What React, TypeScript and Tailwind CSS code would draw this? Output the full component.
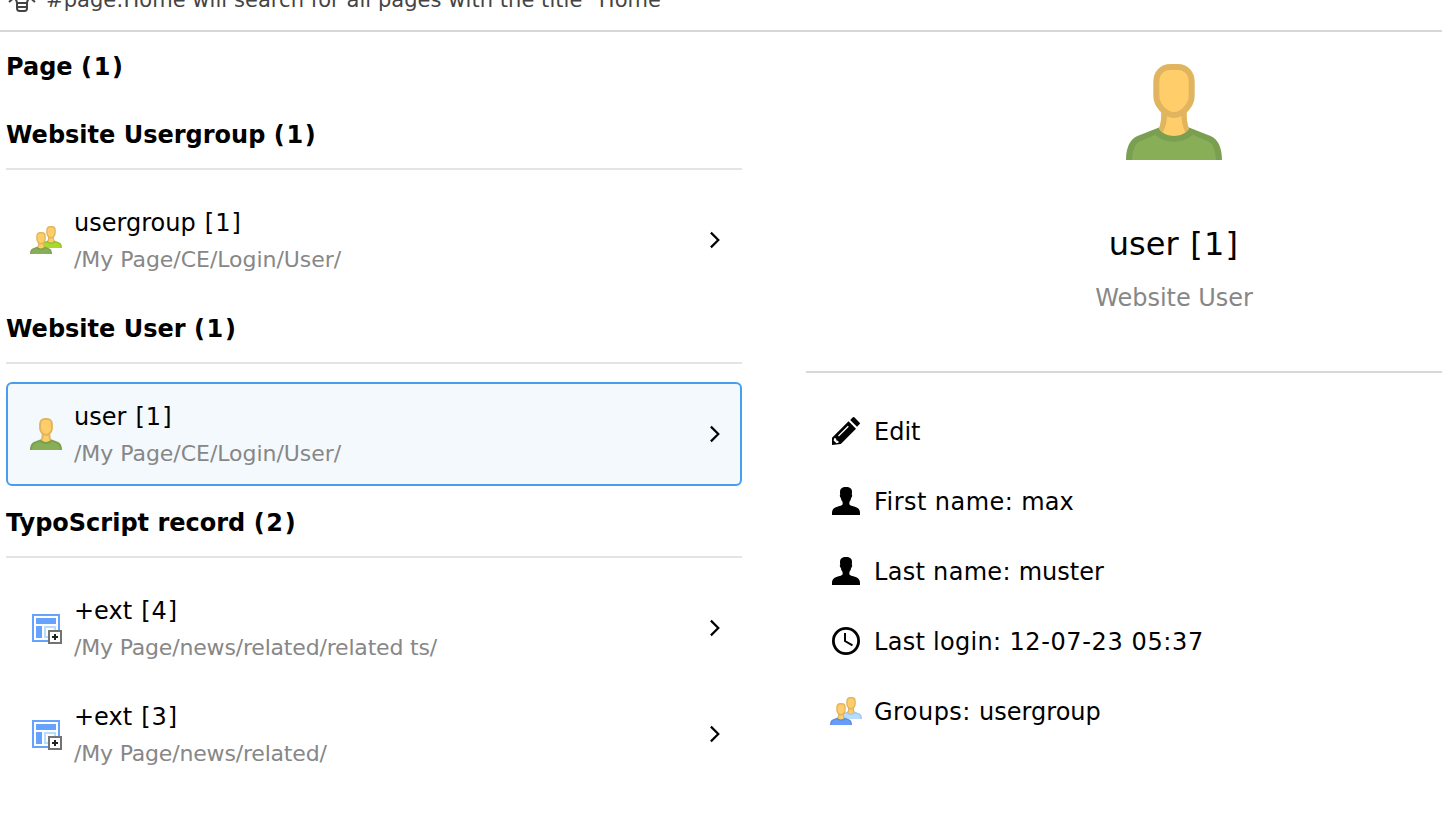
import React from "react";

type Palette = { body: string; edge: string };

const GREEN: Palette = { body: "#88ae58", edge: "#7a9f50" };
const LIME: Palette = { body: "#abd72f", edge: "#9ac22a" };
const BLUE: Palette = { body: "#669df6", edge: "#5c8ddd" };
const SKY: Palette = { body: "#b8dcff", edge: "#a6c6e6" };

function Person({ body, edge }: Palette) {
  return (
    <g>
      <path d="M5.5 10.6 1.900 12C.6 12.500 0 14.100 0 16h16c0-1.900-.6-3.500-1.900-4l-3.600-1.400z" fill={edge} />
      <path
        d="M4.900 11.800C5.700 12.600 6.800 12.950 8 12.950s2.300-.35 3.100-1.150l2.600 1.100c.8.300 1.200 1.500 1.300 3.100H1c.1-1.600.5-2.800 1.300-3.100z"
        fill={body}
      />
      <path d="M5.900 7.500c0 1.300 0 2.200-.4 3.300.6.800 1.500 1.200 2.500 1.200s1.900-.4 2.500-1.200c-.4-1.100-.4-2-.4-3.300z" fill="#ffcd69" />
      <path
        d="M5.900 7.500c0 1.300 0 2.200-.4 3.300l.6.600c.6-1.100.8-2.100.8-3.900zM10.100 7.500c0 1.300 0 2.200.4 3.300l-.6.600c-.5-1.100-.7-2.100-.7-3.900z"
        fill="#e1b55f"
      />
      <path
        d="M7.400.5h1.200c1.450 0 2.350 1.100 2.350 2.500v2.300c0 1.500-1.450 3.200-2.950 3.200S5.050 6.800 5.050 5.300V3C5.050 1.600 5.950.5 7.400.5z"
        fill="#ffcd69"
        stroke="#e1b55f"
      />
    </g>
  );
}

function UserIcon({ className }: { className: string }) {
  return (
    <svg viewBox="0 0 16 16" className={className}>
      <Person {...GREEN} />
    </svg>
  );
}

function GroupIcon({ front, back }: { front: Palette; back: Palette }) {
  return (
    <svg viewBox="0 0 16 16" className="size-8 shrink-0">
      <g transform="translate(5 1) scale(.6875)">
        <Person {...back} />
      </g>
      <g transform="translate(0 4) scale(.6875)">
        <Person {...front} />
      </g>
    </svg>
  );
}

function TemplateIcon() {
  return (
    <svg viewBox="0 0 32 32" className="size-8 shrink-0" shapeRendering="crispEdges">
      <path d="M2 2h28v28H2z" fill="#66a3ff" />
      <path d="M4 4h24v24H4z" fill="#fff" />
      <path d="M6 6h20v6H6zM6 14h6v12H6z" fill="#66a3ff" />
      <path d="M14 14h12v12H14z" fill="#b8dcff" />
      <path d="M16 16h8v8h-8z" fill="#fff" />
      <path d="M18 18h14v14H18z" fill="#737373" />
      <path d="M20 20h10v10H20z" fill="#fff" />
      <path d="M24 22h2v2h2v2h-2v2h-2v-2h-2v-2h2z" fill="#222" />
    </svg>
  );
}

function PencilIcon() {
  return (
    <svg viewBox="0 0 32 32" className="size-8 shrink-0">
      <path d="m24.300 2.300 5.400 5.400a1 1 0 0 1 0 1.400l-2.700 2.700-6.800-6.800 2.700-2.700a1 1 0 0 1 1.400 0z" />
      <path d="m18.600 6.300 7.400 7.400L10.800 28.900 2 30v-7.200z" />
      <path d="M18.300 11.200 8.500 21" stroke="#fff" strokeWidth="1.300" />
      <path d="m4.300 23 1.700.6.500 1.800 1.800.6.500 1.600-2.300.7-2.900-2.900z" fill="#fff" />
    </svg>
  );
}

function SilhouetteIcon() {
  return (
    <svg viewBox="0 0 32 32" className="size-8 shrink-0">
      <path d="M16 2c-4 0-6 1.800-6 5 0 1 .1 1.700.200 2.500-.4.300-.5.900-.3 1.700.2.900.5 1.500 1 1.700.3 1.700.8 2.900 1.600 3.900.2 1 .2 1.600.1 2.400-.2.900-1.300 1.300-3.100 1.800C5 22.300 2 23.500 2 28v2h28v-2c0-4.500-3-5.700-7.500-7-1.800-.5-2.900-.9-3.100-1.800-.1-.8-.1-1.400.1-2.400.8-1 1.300-2.200 1.600-3.900.5-.2.8-.8 1-1.700.2-.8.100-1.400-.3-1.700.1-.8.200-1.500.2-2.500 0-3.200-2-5-6-5z" />
    </svg>
  );
}

function ClockIcon() {
  return (
    <svg viewBox="0 0 32 32" className="size-8 shrink-0" fill="none" stroke="#000">
      <circle cx="16" cy="16" r="12.600" strokeWidth="2.800" />
      <path d="M15 8v8l7.500 4.300" strokeWidth="2" />
    </svg>
  );
}

function Chevron() {
  return (
    <svg viewBox="0 0 12 18" className="mr-[19px] h-[18px] w-3 shrink-0" fill="none" stroke="#000" strokeWidth="2.200">
      <path d="m1.900 1.600 7.400 7.400-7.400 7.400" />
    </svg>
  );
}

function BulbIcon() {
  return (
    <svg viewBox="0 0 32 32" className="-mt-[18px] size-8 shrink-0" fill="none" stroke="#444" strokeWidth="2">
      <path d="M11 21c0-4-4-5-4-11a9 9 0 0 1 18 0c0 6-4 7-4 11zM11 21v5c0 2 1 3 2.500 3h5c1.500 0 2.500-1 2.500-3v-5M11 25h10M3 20l3-2.500M29 20l-3-2.500" />
    </svg>
  );
}

type RowProps = {
  icon: React.ReactNode;
  title: string;
  uid: number;
  path: string;
  pathClass: string;
  selected?: boolean;
};

function ResultRow({ icon, title, uid, path, pathClass, selected }: RowProps) {
  return (
    <div
      className={
        "flex h-[104px] items-center rounded-md border-2 pl-[22px] " +
        (selected ? "border-[#479eec] bg-[#f4f9fe]" : "border-transparent")
      }
    >
      {icon}
      <div className="ml-3 min-w-0 flex-1 pt-0.5 whitespace-nowrap">
        <div className="text-[24px] leading-[37px] [word-spacing:1.5px]">
          {title} <span className="tracking-[1px]">{`[${uid}]`}</span>
        </div>
        <div className={"text-[22px] leading-9 text-[#878787] " + pathClass}>{path}</div>
      </div>
      <Chevron />
    </div>
  );
}

function Heading({ title, count }: { title: string; count: number }) {
  return (
    <h2 className="h-[68px] pt-0.5 text-[24px] leading-[67px] font-bold whitespace-nowrap">
      {title} <span className="tracking-[1.7px]">{`(${count})`}</span>
    </h2>
  );
}

function Section({ title, count, children }: { title: string; count: number; children: React.ReactNode }) {
  return (
    <section className="mb-0.5">
      <Heading title={title} count={count} />
      <div className="flex flex-col gap-0.5 border-t-2 border-[#e4e4e4] pt-[18px]">{children}</div>
    </section>
  );
}

type DetailProps = {
  icon: React.ReactNode;
  label: string;
  value?: string;
  labelClass?: string;
  valueClass?: string;
};

function Detail({ icon, label, value, labelClass, valueClass }: DetailProps) {
  return (
    <li className="flex h-[70px] items-center gap-3">
      {icon}
      <span className="pt-0.5 text-[24px] whitespace-nowrap">
        <span className={labelClass}>
          {label}
          {value ? " " : ""}
        </span>
        {value && <span className={valueClass}>{value}</span>}
      </span>
    </li>
  );
}

export default function App() {
  return (
    <div className="flex h-[814px] w-[1442px] flex-col overflow-hidden bg-white font-['DejaVu_Sans',sans-serif] text-black">
      <header className="flex h-8 shrink-0 items-start overflow-hidden border-b-2 border-[#d7d7d7] pl-[6px]">
        <BulbIcon />
        <p className="-mt-[15px] ml-2 text-[21px] leading-[30px] tracking-[0.05px] whitespace-nowrap text-[#444]">
          #page:Home will search for all pages with the title "Home"
        </p>
      </header>
      <div className="flex flex-1">
        <main className="ml-1.5 w-[736px] shrink-0">
          <Heading title="Page" count={1} />
          <Section title="Website Usergroup" count={1}>
            <ResultRow
              icon={<GroupIcon front={GREEN} back={LIME} />}
              title="usergroup"
              uid={1}
              path="/My Page/CE/Login/User/"
              pathClass="tracking-[-0.04px]"
            />
          </Section>
          <Section title="Website User" count={1}>
            <ResultRow
              icon={<UserIcon className="size-8 shrink-0" />}
              title="user"
              uid={1}
              path="/My Page/CE/Login/User/"
              pathClass="tracking-[-0.04px]"
              selected
            />
          </Section>
          <Section title="TypoScript record" count={2}>
            <ResultRow
              icon={<TemplateIcon />}
              title="+ext"
              uid={4}
              path="/My Page/news/related/related ts/"
              pathClass="tracking-[-0.18px]"
            />
            <ResultRow
              icon={<TemplateIcon />}
              title="+ext"
              uid={3}
              path="/My Page/news/related/"
              pathClass="tracking-[-0.18px]"
            />
          </Section>
        </main>
        <aside className="ml-16 w-[736px] shrink-0">
          <div className="flex h-[341px] flex-col items-center border-b-2 border-[#d7d7d7] pt-8">
            <UserIcon className="size-24" />
            <h1 className="mt-[60px] text-[32px] leading-[48px] [word-spacing:1.5px]">
              user <span className="tracking-[1.2px]">[1]</span>
            </h1>
            <p className="mt-3 text-[24px] leading-9 tracking-[-0.05px] text-[#878787]">Website User</p>
          </div>
          <ul className="pt-[23px] pl-6">
            <Detail icon={<PencilIcon />} label="Edit" />
            <Detail icon={<SilhouetteIcon />} label="First name:" value="max" labelClass="tracking-[0.45px]" />
            <Detail icon={<SilhouetteIcon />} label="Last name:" value="muster" labelClass="tracking-[0.3px]" />
            <Detail
              icon={<ClockIcon />}
              label="Last login:"
              value="12-07-23 05:37"
              labelClass="tracking-[0.3px]"
              valueClass="tracking-[0.62px]"
            />
            <Detail
              icon={<GroupIcon front={BLUE} back={SKY} />}
              label="Groups:"
              value="usergroup"
              labelClass="tracking-[0.45px]"
              valueClass="tracking-[0.04px]"
            />
          </ul>
        </aside>
      </div>
    </div>
  );
}
